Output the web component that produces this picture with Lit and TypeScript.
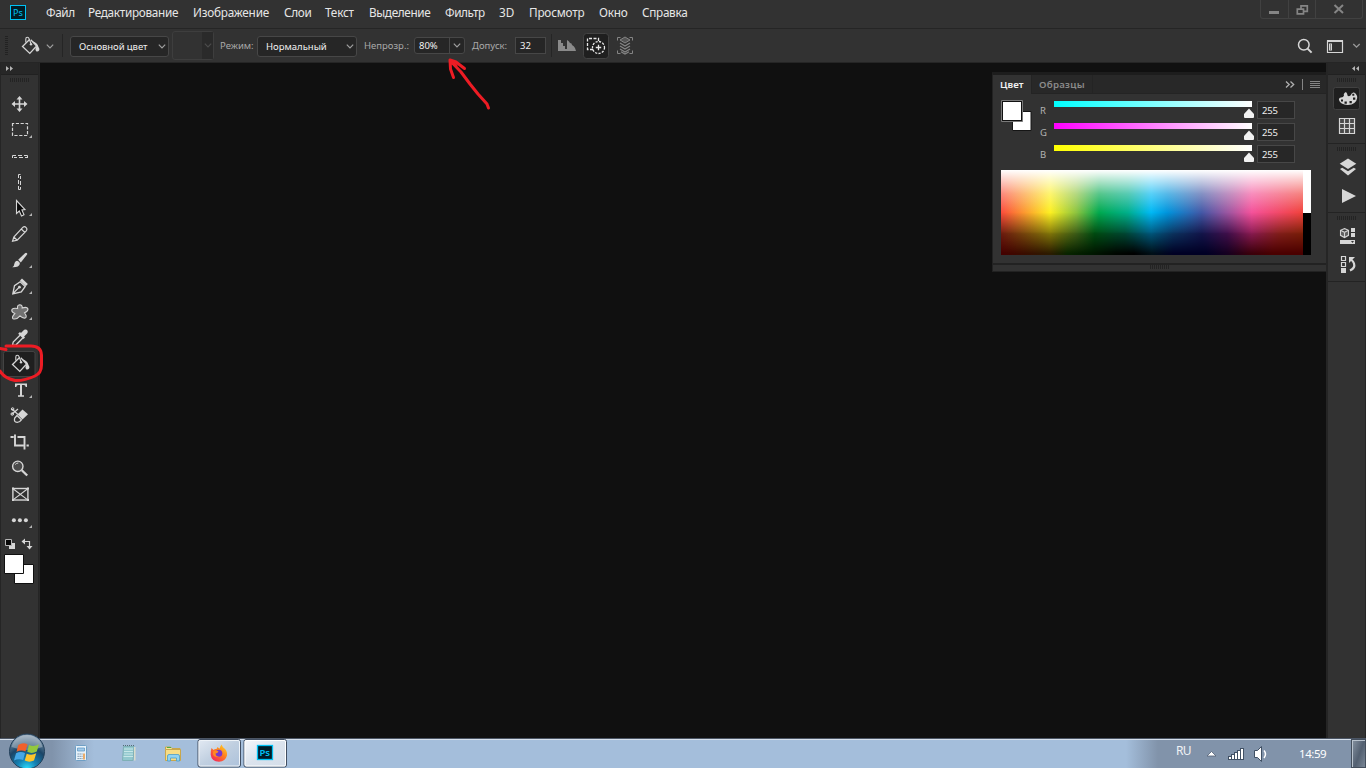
import { LitElement, html, svg, css } from "lit";
import { customElement } from "lit/decorators.js";

const MENU: [string, number, number][] = [
  ["Файл", 42, -0.4], ["Редактирование", 105, -0.3], ["Изображение", 91, -0.2], ["Слои", 41, -0.3],
  ["Текст", 44, -0.2], ["Выделение", 76, -0.35], ["Фильтр", 54, -0.4], ["3D", 30, 0],
  ["Просмотр", 70, -0.2], ["Окно", 43, -0.2], ["Справка", 50, -0.3],
];

const C = "#d6d6d6";

const bucket = svg`
  <path d="M19.300 6.800 L12.500 13.600 L19.800 20.400 L26.600 13 L20.800 6.800" fill="none" stroke="${C}" stroke-width="1.300"/>
  <path d="M15.800 9.500 V6 q0-1.800 1.500-1.800 q1.300 0 1.900 1.800 l1.700 4.500" fill="none" stroke="${C}" stroke-width="1.100"/>
  <circle cx="21" cy="11.200" r="1.200" fill="${C}"/>
  <path d="M22 8 q5.500 1.500 6.300 5.500 q1.700 2.500 .8 4 q-1.500 1.800-3.200 .4 q-1.200-1.700 .6-4.300 q-1-3-4.500-5.600z" fill="${C}"/>`;

const TOOLS: { id: string; more?: boolean; on?: boolean; art: unknown }[] = [
  { id: "move", art: svg`<path d="M19.500 7V19M13.500 13H25.500" stroke="${C}" stroke-width="1.600"/>
    <path d="M19.500 5l3 3.500h-6zM19.500 21l3-3.500h-6zM11.500 13l3.500-3v6zM27.500 13l-3.500-3v6z" fill="${C}"/>` },
  { id: "marquee", more: true, art: svg`<rect x="12.500" y="6.500" width="15" height="12" fill="none" stroke="${C}" stroke-width="1.200" stroke-dasharray="3.200 1.600" stroke-dashoffset="1.500"/>` },
  { id: "row", art: svg`<path d="M12.500 15V12.500H16M18 12.500h4M24 12.500h3.500V15M14 14.500h3M19 14.500h4M25 14.500h2.500" fill="none" stroke="${C}"/>` },
  { id: "col", art: svg`<path d="M20.500 5.500H18.500V9M18.500 11v4M18.500 17v3.500H20.500M20.500 7v3M20.500 12v4M20.500 18v2.500" fill="none" stroke="${C}"/>` },
  { id: "path-select", more: true, art: svg`<path d="M16.500 5.500V18.500L19.300 16L21.500 21L24 19.800L21.900 15L25 14.500Z" fill="#0a0a0a" stroke="${C}" stroke-width="1.100"/>` },
  { id: "pencil", art: svg`<path d="M12.500 20.300L13.800 16L23 6.200Q24.500 5 26.200 6.600Q27.600 8 26.500 9.600L17.200 19.200ZM13.800 16L17.200 19.200M21.300 8L24.800 11.400" fill="none" stroke="${C}" stroke-width="1.200"/>` },
  { id: "brush", more: true, art: svg`<path d="M27 6.200Q26 5.400 25 6.200L18.200 12.800L20.800 15.400L26.900 7.800Q27.500 6.900 27 6.200Z" fill="${C}"/>
    <path d="M17.300 13.700Q20 14.600 19.900 16.800Q19 20.600 12.300 20.300Q14.200 19.200 14.300 17Q14.800 13.900 17.300 13.700Z" fill="${C}"/>` },
  { id: "pen", more: true, art: svg`<path d="M12.800 20.800L14.500 12.600L20.200 8.800L25.200 13.500L21.300 19ZM13 20.500L18.800 14.600" fill="none" stroke="${C}" stroke-width="1.300"/>
    <circle cx="19.400" cy="14.200" r="1.400" fill="${C}"/><path d="M20 7.600l2-2.200 5.800 5.500-2 2.400z" fill="${C}"/>` },
  { id: "shape", more: true, art: svg`<path d="M17.600 9.500Q17 6 19.700 5.800Q22.500 6 22.200 9Q27 7.300 28 10Q28 12.300 24.500 13.800Q27.500 18 25.300 19Q22.800 19.600 20 16.800Q16.500 21 13 19.700Q11.300 18.400 14.800 14.600Q11 12.800 12 10.400Q13.400 8.700 17.600 9.500Z" fill="#727272" stroke="${C}" stroke-width="1.100"/>` },
  { id: "eyedropper", art: svg`<path d="M21.200 7.800l3-3q2.100-1 3.200.6 1 1.600-.3 3.200l-3 3 .9 1-1.500 1.400-5.300-5.300 1.400-1.500z" fill="${C}"/>
    <path d="M20 10.200l-6.800 6.800-.8 3.600 3.700-.8 6.700-6.800" fill="none" stroke="${C}" stroke-width="1.300"/>` },
  { id: "bucket", on: true, art: bucket },
  { id: "type", more: true, art: svg`<path d="M15 6.400H27V10h-1.300q-.2-1.800-1.800-1.900H22V18.200h2v1.500h-6v-1.500h2V8.100h-1.900q-1.600.1-1.800 1.900H15z" fill="${C}"/>` },
  { id: "magic-eraser", art: svg`<path d="M12 6l6 5.500M11.500 11.500L18 6" stroke="${C}" stroke-width="1.200"/>
    <circle cx="12.600" cy="6" r="1.300" fill="none" stroke="${C}"/><circle cx="12.300" cy="11" r="1.300" fill="none" stroke="${C}"/>
    <path d="M22.500 6.500L28 11.300L22.500 16.600L17.500 11.500Z" fill="${C}"/><path d="M17 12.500l-2.300 2.600q-1.200 4.200 2.500 4.300 2.300 0 4.200-2.600z" fill="none" stroke="${C}" stroke-width="1.300"/>` },
  { id: "crop", art: svg`<path d="M10.500 8h3M15 5.500V16.500h8.500M17.500 8h7V20.500M26.500 16.500h2.300M12.200 8h1.500" fill="none" stroke="${C}" stroke-width="1.900"/>` },
  { id: "zoom", art: svg`<circle cx="17.800" cy="11.300" r="5.200" fill="#4a4a4a" stroke="${C}" stroke-width="1.400"/><path d="M15.300 9.500q1.200-1.500 3-1.500" fill="none" stroke="${C}"/><path d="M21.800 15.200l5.400 5.300" stroke="${C}" stroke-width="2.300"/>` },
  { id: "frame", art: svg`<rect x="12.900" y="7.500" width="15" height="11.500" fill="none" stroke="${C}" stroke-width="1.400"/><path d="M13 7.700l14.700 11.200M27.700 7.700L13 18.900" stroke="${C}" stroke-width="1.100"/><path d="M12 6.500h2v2h-2zM27 6.500h2v2h-2zM12 18h2v2h-2zM27 18h2v2h-2z" fill="${C}"/>` },
  { id: "more", more: true, art: svg`<circle cx="13.900" cy="13.200" r="2" fill="${C}"/><circle cx="19.900" cy="13.200" r="2" fill="${C}"/><circle cx="25.900" cy="13.200" r="2" fill="${C}"/>` },
];

const chevron = (cls = "") => html`<svg class="chev ${cls}" width="8" height="5" viewBox="0 0 8 5"><path d="M.8.7L4 3.900L7.200.7" fill="none" stroke="currentColor" stroke-width="1.200"/></svg>`;

@customElement("ps-menu")
class PsMenu extends LitElement {
  static styles = css`
    :host { display: flex; height: 28px; background: #323232; border-bottom: 1px solid #252525; font: 11.75px "Noto Sans", "Open Sans", sans-serif; color: #e6e6e6; }
    .logo { margin: 5px 20px 0 10px; width: 16px; height: 15px; box-sizing: border-box; border: 1px solid #00c2f5; background: #011d27; color: #00c2f5; font-size: 9px; line-height: 13px; text-align: center; flex: none; }
    .item { white-space: nowrap; line-height: 25px; flex: none; }
    .win { margin-left: auto; margin-right: 3px; height: 19px; box-sizing: border-box; width: 103px; border: 1px solid #414141; border-top: 0; border-radius: 0 0 3px 3px; }
  `;
  render() {
    return html`<div class="logo">Ps</div>
      ${MENU.map(([t, w, ls]) => html`<span class="item" style="width:${w}px;letter-spacing:${ls}px">${t}</span>`)}
      <svg class="win" viewBox="1260 0 101 18">
        <path d="M1287.500 0V18M1314.500 0V18" stroke="#414141"/>
        <path d="M1268 11h10v3h-10z" fill="#858585"/>
        <path d="M1300 9V5.900H1306.300V11.300H1302.500M1296.300 9.200H1302.500V13.900H1296.300Z" fill="none" stroke="#858585" stroke-width="1.700"/>
        <path d="M1333.500 5l8.500 8M1342 5l-8.500 8" stroke="#858585" stroke-width="2"/>
      </svg>`;
  }
}

@customElement("ps-options")
class PsOptions extends LitElement {
  static styles = css`
    :host { display: flex; align-items: center; height: 34px; box-sizing: border-box; border-bottom: 1px solid #252525; background: #323232; color: #a9a9a9; font: 9.5px "Noto Sans", "Open Sans", sans-serif; white-space: nowrap; }
    .grip { width: 3px; height: 19px; margin: 0 12px 0 5px; background: repeating-linear-gradient(#222 0 1px, #323232 1px 2px); }
    .bucket { width: 22px; height: 24px; flex: none; }
    .chev { flex: none; color: #a0a0a0; }
    .first { margin: 2px 8px 0 4px; }
    .rule { width: 1px; height: 23px; background: #252525; flex: none; }
    .box { box-sizing: border-box; display: flex; align-items: center; background: #262626; border: 1px solid #474747; color: #f0f0f0; flex: none; }
    .select { height: 21px; border-radius: 3px; margin-top: 2px; padding: 0 2px 0 8px; justify-content: space-between; }
    .s1 { width: 99px; margin-left: 7px; letter-spacing: -.08px; }
    .s2 { width: 100px; }
    .off { width: 42px; height: 29px; margin: 0 6px 0 3px; border-radius: 3px; background: #323232; border-color: #3e3e3e; justify-content: flex-end; }
    .off .chev, .off .arrow { color: #4c4c4c; }
    .arrow { display: flex; align-items: center; justify-content: center; align-self: stretch; border-left: 1px solid #474747; }
    .off .arrow { width: 10px; background: #2a2a2a; border-color: #2a2a2a; }
    .lbl { flex: none; box-sizing: border-box; }
    .l1 { width: 37px; } .l2 { width: 50px; margin-left: 7px; } .l3 { width: 43px; margin-left: 7px; }
    .num { height: 17px; padding-left: 4px; }
    .n1 { width: 51px; justify-content: space-between; border-radius: 3px; }
    .n1 .arrow { width: 14px; }
    .n2 { width: 31px; margin-right: 5px; }
    .icons { width: 84px; height: 30px; flex: none; margin-left: 1px; }
    .right { margin-left: auto; width: 70px; height: 28px; flex: none; }
  `;
  render() {
    return html`<div class="grip"></div>
      <svg class="bucket" viewBox="10 1 22 24">${bucket}</svg>
      ${chevron("first")}
      <div class="rule"></div>
      <div class="box select s1"><span>Основной цвет</span>${chevron()}</div>
      <div class="box off"><span class="arrow">${chevron()}</span></div>
      <span class="lbl l1">Режим:</span>
      <div class="box select s2"><span>Нормальный</span>${chevron()}</div>
      <span class="lbl l2">Непрозр.:</span>
      <div class="box num n1"><span>80%</span><span class="arrow">${chevron()}</span></div>
      <span class="lbl l3">Допуск:</span>
      <div class="box num n2"><span>32</span></div>
      <div class="rule"></div>
      <svg class="icons" viewBox="553 31 84 30">
        <path d="M558 51V40h3v3h2v3h2v3h2v2zM567 51V40q2 1 3 3 2 0 2 2 2 1 3 3l1 3z" fill="#8a8a8a"/>
        <rect x="583.500" y="33.500" width="25" height="25" rx="3" fill="#1f1f1f" stroke="#434343"/>
        <path d="M593 49.500H587.500V38.500H598.500V41" fill="none" stroke="#e8e8e8" stroke-width="1.300" stroke-dasharray="3 1.500"/>
        <circle cx="598.500" cy="47.500" r="6" fill="none" stroke="#e8e8e8" stroke-width="1.300" stroke-dasharray="2.200 1.300"/>
        <path d="M598.500 44.800v5.400M595.800 47.500h5.400" stroke="#e8e8e8" stroke-width="1.300"/>
        <g fill="none" stroke="#858585"><path d="M617.500 40.500v-3h3M629.500 37.500h3v3M617.500 50.500v3h3M632.500 50.500v3h-3"/>
        <path d="M625 37l5 3-5 3-5-3z" fill="#555"/><path d="M620 43l5 3 5-3M620 46l5 3 5-3M620 49l5 3 5-3M621 51.800l4 2.300 4-2.300" stroke-width="1.300"/></g>
      </svg>
      <svg class="right" viewBox="1296 32 70 28">
        <circle cx="1303.800" cy="44.800" r="5.300" fill="none" stroke="#d6d6d6" stroke-width="1.500"/><path d="M1307.600 48.600l4 4" stroke="#d6d6d6" stroke-width="2"/>
        <path d="M1327.500 41h15v11.500h-15z" fill="none" stroke="#d6d6d6" stroke-width="1.200"/><path d="M1327 40h16v2h-16zM1329 43.500h3v7h-3z" fill="#d6d6d6"/><path d="M1330.500 44.500v5" stroke="#323232" stroke-dasharray="1 1"/>
        <path d="M1353.300 44l3.200 3.200 3.200-3.200" fill="none" stroke="#9a9a9a" stroke-width="1.300"/>
      </svg>`;
  }
}

@customElement("ps-toolbar")
class PsToolbar extends LitElement {
  static styles = css`
    :host { display: flex; flex-direction: column; width: 40px; box-sizing: border-box; border-left: 1px solid #252525; border-right: 1px solid #282828; background: #323232; }
    .col { width: 37px; border-right: 1px solid #252525; flex: 1; display: flex; flex-direction: column; }
    .head { height: 11px; background: #272727; border-bottom: 1px solid #212121; padding-left: 5px; }
    .head svg { display: block; }
    .grip { width: 19px; height: 4px; margin: 3px 0 9px 9px; background: repeating-linear-gradient(90deg, #232323 0 1px, #323232 1px 2px); }
    .tool { width: 37px; height: 26px; display: block; flex: none; }
    .swatch { width: 37px; height: 54px; display: block; }
  `;
  render() {
    return html`<div class="col">
      <div class="head"><svg width="9" height="11" viewBox="6 63 9 11"><path d="M6 66l3 2.500-3 2.500zM10 66l3 2.500-3 2.500z" fill="#b5b5b5"/></svg></div>
      <div class="grip"></div>
      ${TOOLS.map((t) => html`<svg class="tool" viewBox="1 0 37 26" data-tool=${t.id}>
        ${t.on ? svg`<rect x="3.500" y=".5" width="31.500" height="25" rx="2" fill="#1f1f1f" stroke="#434343"/>` : ""}
        ${t.art}
        ${t.more ? svg`<path d="M32 18v3h-3z" fill="#b5b5b5"/>` : ""}</svg>`)}
      <svg class="swatch" viewBox="1 533 37 54">
        <path d="M9 543h6v6H9z" fill="#d6d6d6"/><path d="M5.500 539.500h6v6h-6z" fill="#080808" stroke="#b5b5b5"/>
        <path d="M24.500 541.500h5v6" fill="none" stroke="#d6d6d6" stroke-width="1.200"/><path d="M25 538.500v6l-3.500-3zM26.500 546h6l-3 3.500z" fill="#d6d6d6"/>
        <path d="M14.500 564.500h19v19h-19z" fill="#fff" stroke="#101010"/><path d="M4.500 554.500h19v19h-19z" fill="#fff" stroke="#101010"/>
      </svg>
    </div>`;
  }
}

@customElement("ps-dock")
class PsDock extends LitElement {
  static styles = css`
    :host { display: flex; flex-direction: column; width: 40px; box-sizing: border-box; border-left: 2px solid #252525; border-right: 1px solid #252525; background: #323232; }
    .head { height: 11px; background: #272727; border-bottom: 1px solid #212121; }
    .head svg { display: block; margin-left: 23px; }
    .group { border-bottom: 1px solid #232323; display: flex; flex-direction: column; }
    .grip { width: 19px; height: 4px; margin: 3px 0 1px 9px; background: repeating-linear-gradient(90deg, #232323 0 1px, #323232 1px 2px); }
    .group { height: 68px; }
    .art { display: block; width: 37px; height: 60px; }
  `;
  render() {
    return html`<div class="head"><svg width="10" height="11" viewBox="0 0 10 11"><path d="M4 3v5L1 5.500zM8 3v5L5 5.500z" fill="#b5b5b5"/></svg></div>
      <div class="group"><div class="grip"></div><svg class="art" viewBox="1328 83 37 60">
        <rect x="1333.500" y="87.500" width="26" height="22" rx="2" fill="#1f1f1f" stroke="#414141"/>
        <path fill-rule="evenodd" d="M1346 92q1.500 1.500 1.500 3.500 1 1.600 3 .1Q1352 92 1354 92.500q3.500 2 3.200 5.500-1 6.500-9.500 7-7.500-.5-8.700-5 -.5-2 2-2.500 2.500-.2 3-2 -1-2 2-3.500zM1341 99.500v2h2v-2zM1344.500 101.500v2.300h2.300v-2.300zM1349.500 101v2.300h2.300v-2.300zM1353 97.500v2.300h2.300v-2.300zM1352.300 93.800v2h2v-2z" fill="#d6d6d6"/>
        <path d="M1339.500 118.500h15v15h-15zM1344.500 118.500v15M1349.500 118.500v15M1339.500 123.500h15M1339.500 128.500h15" fill="#4a4a4a" stroke="#d6d6d6" stroke-width="1.200"/>
      </svg></div>
      <div class="group"><div class="grip"></div><svg class="art" viewBox="1328 152 37 60">
        <path d="M1348 158.500l8.300 5.200-8.300 5.200-8.300-5.200z" fill="#d6d6d6"/><path d="M1340 169l2.200-1.300 5.800 3.600 5.800-3.600 2.200 1.300-8 6.500z" fill="#d6d6d6"/><path d="M1342 189l14 7-14 7z" fill="#d6d6d6"/>
      </svg></div>
      <div class="group"><div class="grip"></div><svg class="art" viewBox="1328 221 37 60">
        <path d="M1344.500 228.500l4 1.800v5l-4 2.200-4-2.200v-5zM1340.500 230.300l4 2 4-2M1344.500 232.300v5" fill="#606060" stroke="#d6d6d6" stroke-width="1.100"/>
        <path d="M1351 228h4v4h-4zM1351 233h4v4h-4zM1340 240h15v4h-15z" fill="#d6d6d6"/><path d="M1351 241h3l-1.500 2z" fill="#323232"/>
        <path d="M1341.500 256.500h4v4h-4zM1341.500 262.500h4v4h-4z" fill="none" stroke="#d6d6d6" stroke-width="1.200"/><path d="M1341 268h5v5h-5z" fill="#d6d6d6"/>
        <path d="M1350 270.500q5.500-2.500 4-7-.8-2.300-3.500-4.500" fill="none" stroke="#d6d6d6" stroke-width="2.200"/><path d="M1349 263v-6h6z" fill="#d6d6d6"/>
      </svg></div>`;
  }
}

@customElement("ps-color")
class PsColor extends LitElement {
  static styles = css`
    :host { display: block; box-sizing: border-box; width: 334px; height: 200px; border: 1px solid #222; border-top: 3px solid #1d1d1d; border-right: 0; background: #323232; font: 9.7px "Noto Sans", "Open Sans", sans-serif; color: #b2b2b2; }
    .tabs { display: flex; height: 18px; background: #282828; border-bottom: 1px solid #242424; font-weight: 600; line-height: 19px; }
    .tab { border-right: 1px solid #242424; box-sizing: border-box; padding-left: 7px; letter-spacing: .1px; }
    .on { width: 39px; height: 19px; background: #323232; color: #f2f2f2; } .t2 { width: 61px; letter-spacing: .25px; color: #8a8a8a; }
    .ctl { margin-left: auto; width: 46px; height: 18px; }
    .body { display: flex; height: 76px; padding-left: 8px; }
    .sw { width: 32px; height: 40px; margin-right: 7px; flex: none; }
    .rows { padding-top: 7px; display: flex; flex-direction: column; }
    .row { height: 22px; display: flex; }
    .name { width: 14px; line-height: 20px; font-size: 9.5px; flex: none; }
    .track { width: 203px; height: 20px; flex: none; }
    .bar { width: 198px; height: 6px; }
    .r { background: linear-gradient(90deg, #0ff, #fff); } .g { background: linear-gradient(90deg, #f0f, #fff); } .b { background: linear-gradient(90deg, #ff0, #fff); }
    .thumb { display: block; margin: 1px 0 0 190px; }
    .val { width: 38px; height: 18px; box-sizing: border-box; border: 1px solid #474747; background: #272727; color: #eee; padding-left: 4px; line-height: 17px; font-size: 9.5px; letter-spacing: -.2px; }
    .spec { display: flex; height: 85px; margin-left: 8px; width: 310px; }
    .hues { width: 302px; display: grid; background: linear-gradient(90deg, #fb4b3c, #fdf022 16.3%, #8cc440 25%, #00a94f 32.5%, #00b08c 42%, #00b9f5 49.7%, #0094dc 55%, #4458a6 66.5%, #a656a0 76%, #f4529b 83%, #f1423b); }
    .dim, .dark, .light { grid-area: 1 / 1; }
    .dim { background: linear-gradient(90deg, #6e1c10, #857a0a 16.3%, #3e5e18 25%, #004e12 31%, #004a35 41%, #005a80 49.7%, #0c3560 57%, #14164c 66.5%, #42104c 75%, #8c1c54 83%, #84201c 92%, #7a2008);
      -webkit-mask-image: linear-gradient(transparent 50%, #000 75%); mask-image: linear-gradient(transparent 50%, #000 75%); }
    .dark { background: linear-gradient(90deg, #450000, #2c1c00 16.3%, #082400 22%, #001a00 29%, #000600 38%, #000 44%, #001018 50%, #000024 57%, #000024 68%, #160020 75%, #38000c 82%, #4a0000 90%);
      -webkit-mask-image: linear-gradient(transparent 73%, #000 98%); mask-image: linear-gradient(transparent 73%, #000 98%); }
    .light { background: linear-gradient(#fff, rgba(255,255,255,.76) 10%, rgba(255,255,255,.34) 28%, transparent 50%); }
    .mono { width: 8px; background: linear-gradient(#fff 43px, #000 43px); }
    .foot { margin-top: 8px; height: 6px; border-top: 2px solid #222; padding: 0 0 0 157px; }
    .grip { width: 19px; height: 4px; background: repeating-linear-gradient(90deg, #232323 0 1px, #323232 1px 2px); }
  `;
  render() {
    return html`<div class="tabs"><div class="tab on">Цвет</div><div class="tab t2">Образцы</div>
        <svg class="ctl" viewBox="1280 75 46 18"><path d="M1286 81.500l3.200 3-3.200 3M1290.500 81.500l3.200 3-3.200 3" fill="none" stroke="#b0b0b0" stroke-width="1.300"/><path d="M1302.500 79v11" stroke="#858585"/><path d="M1310 81.500h10M1310 83.500h10M1310 85.500h10M1310 87.500h10" stroke="#858585"/></svg></div>
      <div class="body"><svg class="sw" viewBox="1001 94 32 40"><path d="M1012.500 111.500h18.500v19h-18.500z" fill="#fff" stroke="#151515"/><path d="M1001.500 100.500h21v21h-21z" fill="#111" stroke="#7a7a7a"/><path d="M1003 102h18v18h-18z" fill="#fff"/></svg>
        <div class="rows">${["R", "G", "B"].map((n) => html`<div class="row"><span class="name">${n}</span>
          <div class="track"><div class="bar ${n.toLowerCase()}"></div><svg class="thumb" width="10" height="10" viewBox="0 0 10 10"><path d="M5 .5L10 6V9Q10 10 9 10H1Q0 10 0 9V6Z" fill="#f2f2f2"/></svg></div>
          <div class="val">255</div></div>`)}</div></div>
      <div class="spec"><div class="hues"><div class="dim"></div><div class="dark"></div><div class="light"></div></div><div class="mono"></div></div>
      <div class="foot"><div class="grip"></div></div>`;
  }
}

@customElement("win-taskbar")
class WinTaskbar extends LitElement {
  static styles = css`
    :host { display: flex; height: 30px; box-sizing: border-box; border-top: 1px solid #4b5564; box-shadow: inset 0 1px #d5dfeb; background: linear-gradient(90deg, #8093ab 0 52px, #a4bedb 94px 1126px, #8193aa 1158px); font: 12px "Noto Sans", "Open Sans", sans-serif; color: #fff; }
    .left { width: 300px; height: 36px; margin-top: -6px; flex: none; }
    .tray { margin-left: auto; display: flex; flex: none; }
    .lang { width: 30px; line-height: 24px; letter-spacing: -.6px; color: #f0f2f5; }
    .ico { width: 93px; height: 29px; }
    .time { width: 52px; line-height: 30px; font-size: 11.5px; letter-spacing: -.45px; }
    .show { width: 15px; box-sizing: border-box; border: 1px solid #444f5d; box-shadow: inset 1px 1px #b9c3ce; background: linear-gradient(110deg, #8793a2, #536071 55%, #7a8796); }
    .ps { font: 600 9.5px "Noto Sans", sans-serif; }
  `;
  render() {
    return html`<svg class="left" viewBox="0 733 300 36">
        <defs>
          <radialGradient id="orb" cx=".5" cy="1" r=".95"><stop offset="0" stop-color="#2fe0ff"/><stop offset=".3" stop-color="#1482b4"/><stop offset=".65" stop-color="#1b4567"/><stop offset="1" stop-color="#8298ac"/></radialGradient>
          <linearGradient id="btn" x2="1" y2="1"><stop offset="0" stop-color="#e3eaf3"/><stop offset=".5" stop-color="#c0cfe0"/><stop offset="1" stop-color="#adc2db"/></linearGradient>
          <linearGradient id="btn2" x2="1" y2="1"><stop offset="0" stop-color="#f6f8fb"/><stop offset=".5" stop-color="#dbe3ed"/><stop offset="1" stop-color="#d3dde9"/></linearGradient>
          <linearGradient id="fx" x1="1" x2=".2" y2="1"><stop offset="0" stop-color="#ffe226"/><stop offset=".5" stop-color="#ff7d1f"/><stop offset="1" stop-color="#f5235d"/></linearGradient>
        </defs>
        <circle cx="27" cy="751.500" r="17.500" fill="url(#orb)" stroke="#23405a"/>
        <path d="M11.500 747a16 16 0 0 1 31 0q-15 6-31 0z" fill="#fff" opacity=".3"/>
        <g transform="translate(27.500,750.500) scale(1.120) translate(-27.200,-751.500)"><path d="M19 746.500q4-2.500 8.200-.5l-1.800 6.300q-4-1.800-8 .4z" fill="#f0602a"/><path d="M28.500 746.500q4.500 2 9-.5l-2 6.500q-4.500 2.300-8.500.2z" fill="#93c83e"/>
        <path d="M17 754q4-2 8-.2l-1.700 6.200q-4-1.800-8.200.5z" fill="#45a7e6"/><path d="M26.500 754.300q4.300 2 8.500-.3l-2 6.500q-4.300 2-8.300 0z" fill="#fcc52c"/></g>
        <rect x="75.500" y="745.500" width="11" height="15" rx="1" fill="#e7f2fa" stroke="#6f9fc5"/><path d="M77.500 748h7v3h-7z" fill="#a0caea" stroke="#5a92bf" stroke-width=".7"/><path d="M77.500 754h5M77.500 756.300h5M77.500 758.600h5" stroke="#6b87a0" stroke-dasharray="1.300 .7"/><path d="M84 753.500v6" stroke="#ed9538" stroke-width="1.500"/>
        <path d="M123.500 746.500h10.500l-1 14h-10.500z" fill="#92c8ce" stroke="#7fb0b6"/><path d="M124 749h9M124 751.500h9M124 754h9M123.500 756.500h9.500" stroke="#c7e7e8"/><path d="M123 745.500h11.500" stroke="#546d77" stroke-dasharray="1 1"/><path d="M134.800 747v13.500" stroke="#e8e5ca" stroke-width="1.200"/>
        <path d="M165.500 749.500v-2.500h5l1.500 1.500h8v3" fill="#f6e597" stroke="#c8a74c"/><path d="M165.500 749.500h15v11h-15z" fill="#f7dd85" stroke="#c8a74c"/><path d="M167.500 761v-5q0-1.500 1.500-1.500h9q1.500 0 1.500 1.500v5h-3v-3h-6v3z" fill="#91d3f1" stroke="#4a9cc8" stroke-width=".8"/><path d="M167 747.500h4" stroke="#4cab45"/>
        <rect x="198" y="739.500" width="42.500" height="27.500" rx="2" fill="url(#btn)" stroke="#414e61"/><rect x="199" y="740.500" width="40.500" height="25.500" rx="1.500" fill="none" stroke="#eef3f8"/>
        <rect x="244" y="739.500" width="42.500" height="27.500" rx="2" fill="url(#btn2)" stroke="#414e61"/><rect x="245" y="740.500" width="40.500" height="25.500" rx="1.500" fill="none" stroke="#fff"/>
        <path d="M211.500 748l2 2q1.500-1.200 3-.9l1-2q1 1.200 2.500 1.500 0-2 1.500-4 1 3 3.500 4.500 2.500 2.500 2 6.500-1.500 6-8 6.200-7.500-.3-8.300-7-.2-4 .8-6.800z" fill="url(#fx)"/><circle cx="218.800" cy="753.300" r="3.500" fill="#7a37c9"/><path d="M213.500 751q3-1 5 .5-1 2-3 2 0 3 3.500 3.300-5 1-6.200-3z" fill="#ff8a22"/>
        <rect x="257.500" y="745.500" width="15" height="14" fill="#011c27" stroke="#00c2f5" stroke-width="1.300"/><text class="ps" x="259.500" y="756.300" fill="#00c2f5">Ps</text>
      </svg>
      <div class="tray"><span class="lang">RU</span>
        <svg class="ico" viewBox="1206 739 93 29"><path d="M1207 756l4.500-4.500 4.500 4.500z" fill="#fff" stroke="#536175" stroke-width=".8"/>
          <path d="M1228 756h3v-2h3v-2h3v-2h3v-2h4v12h-16z" fill="#405064"/>
          <path d="M1229 757h2v2h-2zM1232 755h2v4h-2zM1235 753h2v6h-2zM1238 751h2v8h-2zM1241 749h2v10h-2z" fill="#fff"/>
          <path d="M1254.500 750.500h3l4-4v15l-4-4h-3z" fill="#fff" stroke="#405064"/><path d="M1264 750.500q3 3.500 0 7.500" fill="none" stroke="#fff" stroke-width="1.500"/></svg>
        <span class="time">14:59</span><div class="show"></div></div>`;
  }
}

@customElement("app-root")
class AppRoot extends LitElement {
  static styles = css`
    :host { display: flex; flex-direction: column; width: 1366px; height: 768px; overflow: hidden; position: relative; background: #101010; }
    .main { flex: 1; display: flex; justify-content: space-between; min-height: 0; }
    .float { position: absolute; left: 992px; top: 72px; }
    .marks { position: absolute; left: 0; top: 0; pointer-events: none; }
  `;
  render() {
    return html`<ps-menu></ps-menu><ps-options></ps-options>
      <div class="main"><ps-toolbar></ps-toolbar><ps-dock></ps-dock></div>
      <win-taskbar></win-taskbar>
      <ps-color class="float"></ps-color>
      <svg class="marks" width="500" height="400" viewBox="0 0 500 400" fill="none" stroke="#ed1c24" stroke-width="3" stroke-linecap="round" stroke-linejoin="round">
        <path d="M488.500 108L487 104L478 94L470 84L461 72L450.500 61M450 60L450.500 69L453.500 77.500M450 60L456 62L464.500 68.500M451 62L456 66"/>
        <path d="M6 346H31Q41 346 41.500 355V365Q41.500 373 35 376Q24 381 15 380.500Q4 378 0 371M0 348.500L6 349.500" />
      </svg>`;
  }
}
